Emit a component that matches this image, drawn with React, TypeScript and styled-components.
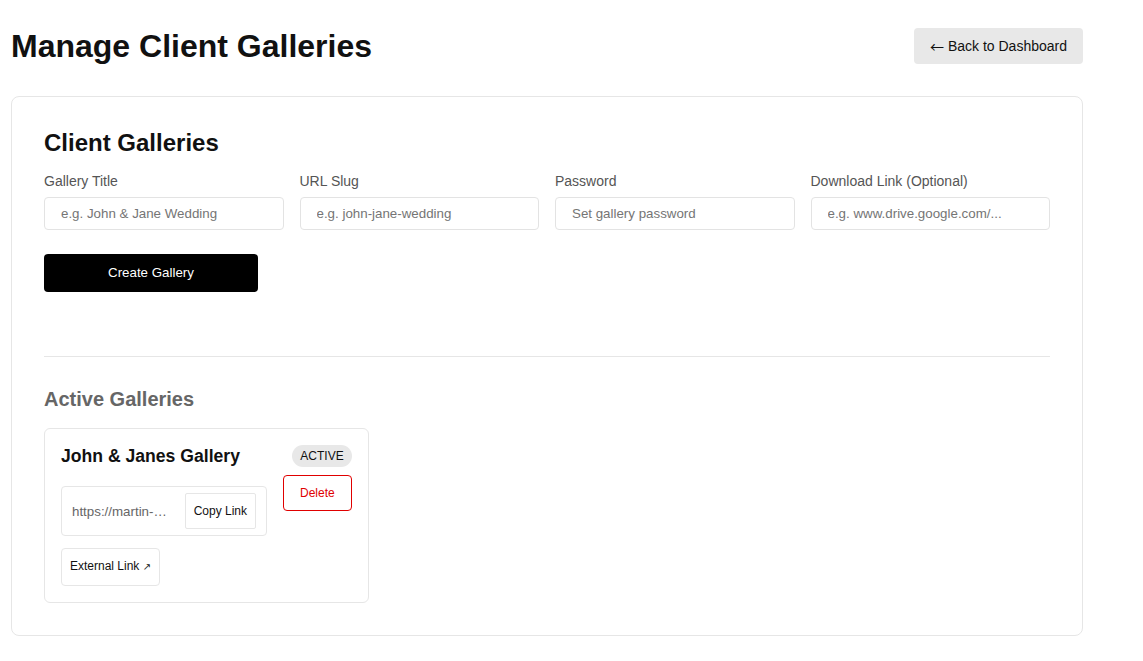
import React, { useState } from 'react';
import styled, { createGlobalStyle } from 'styled-components';

const GlobalStyle = createGlobalStyle`
  * {
    box-sizing: border-box;
  }
  body {
    margin: 0;
    background: #ffffff;
    font-family: 'Liberation Sans', Arial, sans-serif;
    color: #111111;
  }
`;

interface Gallery {
  title: string;
  url: string;
  active: boolean;
}

const fields = [
  { label: 'Gallery Title', placeholder: 'e.g. John & Jane Wedding', type: 'text' },
  { label: 'URL Slug', placeholder: 'e.g. john-jane-wedding', type: 'text' },
  { label: 'Password', placeholder: 'Set gallery password', type: 'password' },
  { label: 'Download Link (Optional)', placeholder: 'e.g. www.drive.google.com/...', type: 'text' },
];

const galleries: Gallery[] = [
  {
    title: 'John & Janes Gallery',
    url: 'https://martin-photography.com/gallery/john-jane',
    active: true,
  },
];

const App = () => {
  const [values, setValues] = useState<string[]>(fields.map(() => ''));

  const handleChange = (index: number, value: string) => {
    setValues((prev) => prev.map((v, i) => (i === index ? value : v)));
  };

  return (
    <Page>
      <GlobalStyle />
      <Header>
        <Title>Manage Client Galleries</Title>
        <BackButton>
          <BackArrow>←</BackArrow>Back to Dashboard
        </BackButton>
      </Header>

      <Panel>
        <SectionTitle>Client Galleries</SectionTitle>
        <FormGrid>
          {fields.map((field, i) => (
            <Field key={field.label}>
              <Label>{field.label}</Label>
              <TextInput
                type={field.type}
                placeholder={field.placeholder}
                value={values[i]}
                onChange={(e) => handleChange(i, e.target.value)}
              />
            </Field>
          ))}
        </FormGrid>
        <CreateButton>Create Gallery</CreateButton>

        <Divider />

        <SubTitle>Active Galleries</SubTitle>
        <GalleryList>
          {galleries.map((gallery) => (
            <GalleryCard key={gallery.title}>
              <CardMain>
                <GalleryName>{gallery.title}</GalleryName>
                <LinkBox>
                  <LinkText>{gallery.url}</LinkText>
                  <SmallButton>Copy Link</SmallButton>
                </LinkBox>
                <ExternalButton>
                  External Link <SmallArrow>↗</SmallArrow>
                </ExternalButton>
              </CardMain>
              <CardSide>
                {gallery.active && <Badge>ACTIVE</Badge>}
                <DeleteButton>Delete</DeleteButton>
              </CardSide>
            </GalleryCard>
          ))}
        </GalleryList>
      </Panel>
    </Page>
  );
};

const Page = styled.div`
  width: 1072px;
  margin-left: 11px;
  padding-top: 28px;
  padding-bottom: 25px;
`;

const Header = styled.header`
  display: flex;
  justify-content: space-between;
  align-items: flex-start;
  margin-bottom: 31px;
`;

const Title = styled.h1`
  margin: 0;
  font-size: 32px;
  font-weight: 700;
  color: #111111;
`;

const BackButton = styled.button`
  display: flex;
  align-items: center;
  font-family: 'Liberation Sans', Arial, sans-serif;
  font-size: 14px;
  line-height: 16px;
  padding: 10px 16px;
  background: #e8e8e8;
  color: #111111;
  border: none;
  border-radius: 4px;
  cursor: pointer;
`;

const BackArrow = styled.span`
  font-family: 'Noto Sans CJK SC', 'DejaVu Sans', sans-serif;
  font-size: 14px;
  line-height: 16px;
  margin-right: 4px;
`;

const Panel = styled.section`
  border: 1px solid #e6e6e6;
  border-radius: 8px;
  padding: 32px;
`;

const SectionTitle = styled.h2`
  margin: 0 0 16px;
  font-size: 24px;
  font-weight: 700;
  color: #111111;
`;

const FormGrid = styled.div`
  display: grid;
  grid-template-columns: repeat(4, 1fr);
  gap: 16px;
  margin-bottom: 24px;
`;

const Field = styled.div`
  display: flex;
  flex-direction: column;
`;

const Label = styled.label`
  font-size: 14px;
  color: #555555;
  margin-bottom: 8px;
`;

const TextInput = styled.input`
  font-family: 'Liberation Sans', Arial, sans-serif;
  font-size: 13.333px;
  padding: 8px 16px;
  border: 1px solid #e3e3e3;
  border-radius: 4px;
  color: #111111;
  outline: none;
  &::placeholder {
    color: #757575;
  }
  &:focus {
    border-color: #999999;
  }
`;

const CreateButton = styled.button`
  display: block;
  font-family: 'Liberation Sans', Arial, sans-serif;
  font-size: 13.333px;
  line-height: 16px;
  padding: 11px 64px;
  background: #000000;
  color: #ffffff;
  border: none;
  border-radius: 4px;
  cursor: pointer;
`;

const Divider = styled.hr`
  border: none;
  border-top: 1px solid #e6e6e6;
  margin: 64px 0 31px;
`;

const SubTitle = styled.h3`
  margin: 0 0 17px;
  font-size: 20px;
  font-weight: 700;
  color: #666666;
`;

const GalleryList = styled.div`
  display: grid;
  grid-template-columns: repeat(auto-fill, 325px);
  gap: 16px;
`;

const GalleryCard = styled.div`
  display: flex;
  gap: 16px;
  padding: 16px;
  border: 1px solid #e6e6e6;
  border-radius: 6px;
`;

const CardMain = styled.div`
  display: flex;
  flex-direction: column;
  align-items: flex-start;
  width: 206px;
`;

const GalleryName = styled.h4`
  margin: 0 0 19px;
  font-size: 17.6px;
  line-height: 22px;
  font-weight: 700;
  color: #111111;
  white-space: nowrap;
`;

const LinkBox = styled.div`
  display: flex;
  align-items: center;
  gap: 11px;
  width: 206px;
  padding: 6px 10px;
  border: 1px solid #e6e6e6;
  border-radius: 4px;
  margin-bottom: 12px;
`;

const LinkText = styled.span`
  flex: 1;
  min-width: 0;
  font-size: 13.333px;
  color: #666666;
  white-space: nowrap;
  overflow: hidden;
  text-overflow: ellipsis;
`;

const SmallButton = styled.button`
  flex-shrink: 0;
  font-family: 'Liberation Sans', 'DejaVu Sans', sans-serif;
  font-size: 12px;
  line-height: 14px;
  padding: 10px 8px;
  background: #ffffff;
  color: #111111;
  border: 1px solid #e6e6e6;
  border-radius: 2px;
  white-space: nowrap;
  cursor: pointer;
`;

const ExternalButton = styled(SmallButton)`
  padding: 10px 8px 11px;
  border-radius: 4px;
`;

const SmallArrow = styled.span`
  font-family: 'DejaVu Sans', sans-serif;
  font-size: 10px;
`;

const CardSide = styled.div`
  display: flex;
  flex-direction: column;
  align-items: flex-end;
  gap: 8px;
`;

const Badge = styled.span`
  font-size: 12px;
  line-height: 22px;
  padding: 0 8px;
  background: #e8e8e8;
  color: #111111;
  border-radius: 11px;
`;

const DeleteButton = styled.button`
  font-family: 'Liberation Sans', Arial, sans-serif;
  font-size: 12px;
  line-height: 14px;
  padding: 10px 16px;
  background: #ffffff;
  color: #e00000;
  border: 1px solid #e00000;
  border-radius: 4px;
  cursor: pointer;
`;

export default App;
